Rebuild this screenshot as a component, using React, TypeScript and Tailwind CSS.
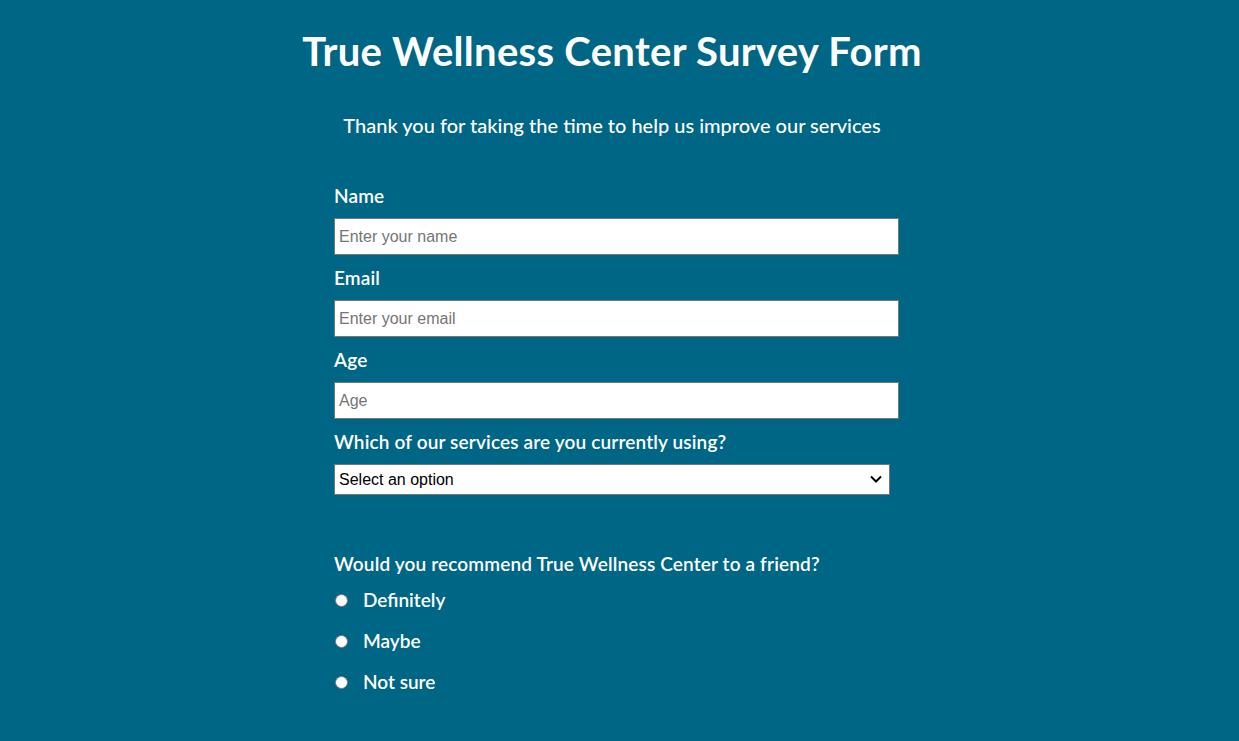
export default function App() {
  const fieldLabel = "block text-[19px] font-semibold leading-6 tracking-[0.15px] text-white";
  const input =
    "mt-[10px] block h-[37px] w-[565px] border border-[#767676] bg-white px-[4px] text-[16px] text-black placeholder:text-[#757575] outline-none";

  return (
    <div
      className="min-h-[741px] w-full bg-[#006685] pr-[15px]"
      style={{ fontFamily: "'Lato', 'DejaVu Sans', sans-serif" }}
    >
      <h1 className="pt-[27px] text-center text-[40px] font-bold leading-[48px] tracking-[0.3px] text-white">
        True Wellness Center Survey Form
      </h1>
      <p className="mt-[38px] text-center text-[20px] font-medium leading-6 text-white">
        Thank you for taking the time to help us improve our services
      </p>

      <form className="mx-auto mt-[47px] w-[556px]">
        <label className={fieldLabel} htmlFor="name">
          Name
        </label>
        <input
          id="name"
          type="text"
          placeholder="Enter your name"
          className={input}
          style={{ fontFamily: "'Liberation Sans', Arial, sans-serif" }}
        />

        <label className={`${fieldLabel} mt-[11px]`} htmlFor="email">
          Email
        </label>
        <input
          id="email"
          type="email"
          placeholder="Enter your email"
          className={input}
          style={{ fontFamily: "'Liberation Sans', Arial, sans-serif" }}
        />

        <label className={`${fieldLabel} mt-[11px]`} htmlFor="age">
          Age
        </label>
        <input
          id="age"
          type="number"
          placeholder="Age"
          className={input}
          style={{ fontFamily: "'Liberation Sans', Arial, sans-serif" }}
        />

        <label className={`${fieldLabel} mt-[11px]`} htmlFor="service">
          Which of our services are you currently using?
        </label>
        <div className="relative mt-[10px] h-[31px] w-[556px]">
          <select
            id="service"
            defaultValue=""
            className="block h-full w-full appearance-none border border-[#767676] bg-white pl-[4px] text-[16px] text-black outline-none"
            style={{ fontFamily: "'Liberation Sans', Arial, sans-serif" }}
          >
            <option value="">Select an option</option>
            <option value="fitness">Fitness</option>
            <option value="nutrition">Nutrition</option>
            <option value="therapy">Therapy</option>
          </select>
          <svg
            className="pointer-events-none absolute right-[8px] top-[11px]"
            width="12"
            height="8"
            viewBox="0 0 12 8"
            fill="none"
          >
            <path d="M1 1.5 L6 6.5 L11 1.5" stroke="#000" strokeWidth="2" />
          </svg>
        </div>

        <p className={`${fieldLabel} mt-[57px]`}>
          Would you recommend True Wellness Center to a friend?
        </p>
        <div className="mt-[12px] flex flex-col gap-[17px]">
          {["Definitely", "Maybe", "Not sure"].map((opt) => (
            <label
              key={opt}
              className="flex items-center text-[19px] font-semibold leading-6 text-white"
            >
              <span className="ml-[1px] h-[13px] w-[13px] rounded-full border border-[#767676] bg-white" />
              <span className="ml-[15px]">{opt}</span>
            </label>
          ))}
        </div>
      </form>
    </div>
  );
}
